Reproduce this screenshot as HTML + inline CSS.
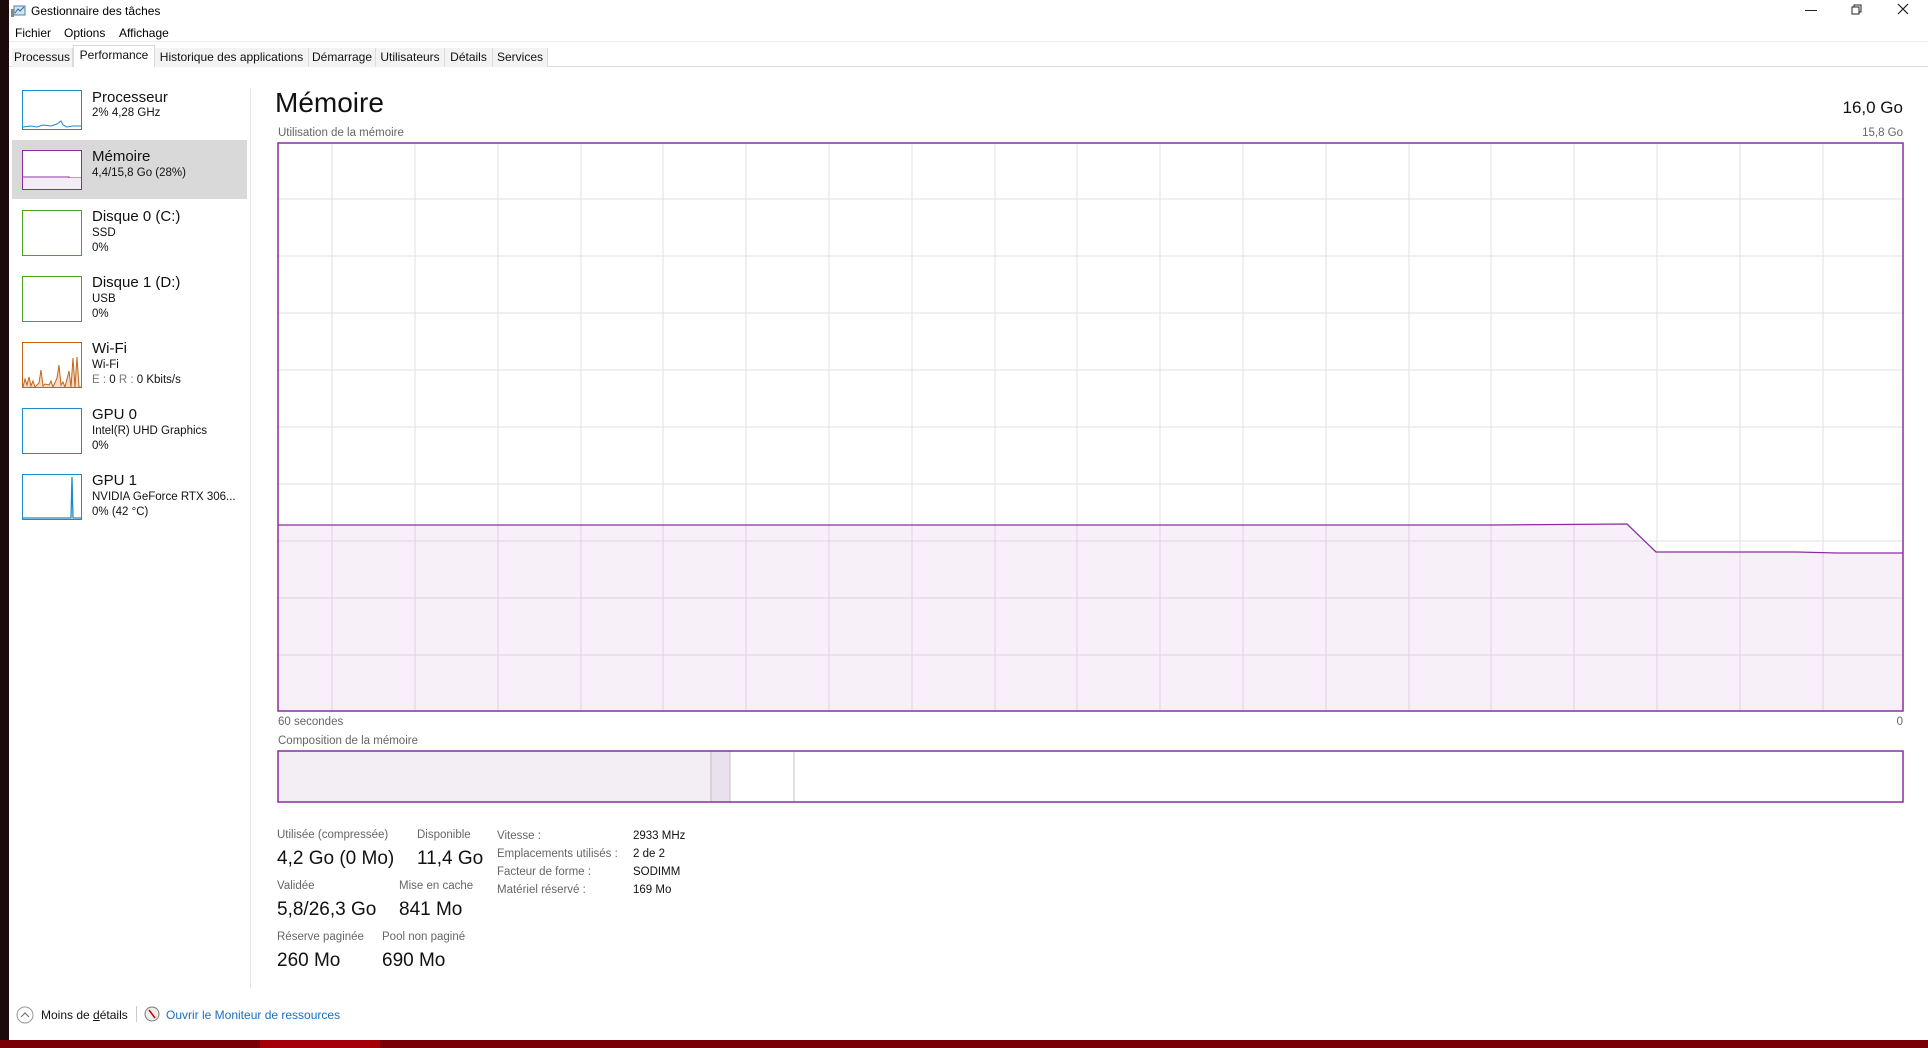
<!DOCTYPE html>
<html><head><meta charset="utf-8"><style>
*{margin:0;padding:0;box-sizing:border-box}
body{width:1928px;height:1048px;overflow:hidden;background:#fff;font-family:"Liberation Sans",sans-serif;color:#000;position:relative}
.a{position:absolute;white-space:nowrap}
.tab{position:absolute;top:48px;height:19px;font-size:12px;line-height:19px;text-align:center;background:#f3f3f3;border-right:1px solid #dcdcdc;color:#111;white-space:nowrap;overflow:hidden}
.thumb{position:absolute;left:22px;width:60px;border:1px solid}
.nm{font-size:15px;color:#111}
.sb{font-size:11.5px;color:#111;line-height:15px}
.lbl{font-size:11.5px;color:#666}
.val{font-size:19px;color:#111}
</style></head><body>
<div class="a" style="left:0;top:0;width:9px;height:1048px;background:#1a0a0a"></div>
<div class="a" style="left:0;top:1040px;width:1928px;height:8px;background:#7a0008"></div>
<div class="a" style="left:260px;top:1040px;width:120px;height:8px;background:#a5000a"></div>
<!-- title -->
<svg class="a" style="left:11px;top:5px" width="15" height="13"><rect x="3" y="1" width="11" height="9" fill="#cfe3f3" stroke="#5a7fa0"/><polyline points="4,8 7,4 9,6 13,2" fill="none" stroke="#2a6aa0"/><rect x="0" y="4" width="3" height="8" fill="#888"/></svg>
<div class="a" style="left:31px;top:4px;font-size:12px">Gestionnaire des tâches</div>
<div class="a" style="left:1805px;top:10px;width:12px;height:1px;background:#222"></div>
<svg class="a" style="left:1851px;top:4px" width="12" height="12"><rect x="1" y="3" width="7" height="7" fill="none" stroke="#222"/><polyline points="3,3 3,1 10,1 10,8 8,8" fill="none" stroke="#222"/></svg>
<svg class="a" style="left:1897px;top:3px" width="12" height="12"><path d="M1 1L11 11M11 1L1 11" stroke="#222" stroke-width="1.2"/></svg>
<div class="a" style="left:15px;top:26px;font-size:12px">Fichier</div>
<div class="a" style="left:64px;top:26px;font-size:12px">Options</div>
<div class="a" style="left:119px;top:26px;font-size:12px">Affichage</div>
<div class="a" style="left:9px;top:41px;width:1919px;height:1px;background:#ececec"></div>
<div class="a" style="left:9px;top:66px;width:1919px;height:1px;background:#d9d9d9"></div>
<div class="tab" style="left:12px;width:61px">Processus</div>
<div class="tab" style="left:73px;width:82px;top:45px;height:22px;background:#fff;border:1px solid #d9d9d9;border-bottom:none;line-height:18px">Performance</div>
<div class="tab" style="left:155px;width:154px">Historique des applications</div>
<div class="tab" style="left:309px;width:67px">Démarrage</div>
<div class="tab" style="left:376px;width:69px">Utilisateurs</div>
<div class="tab" style="left:445px;width:48px">Détails</div>
<div class="tab" style="left:493px;width:55px">Services</div>
<!-- sidebar -->
<div class="a" style="left:12px;top:140px;width:235px;height:59px;background:#d9d9d9"></div>
<div class="a" style="left:250px;top:88px;width:1px;height:900px;background:#e4e4e4"></div>
<svg class="thumb" style="top:90px;height:40px;border-color:#1c8bc7" width="60" height="40"><polyline points="0,36 8,35 14,36 20,34 28,35 34,33 38,30 40,34 44,36 50,35 58,35" fill="none" stroke="#1c8bc7"/></svg>
<div class="a nm" style="left:92px;top:89px">Processeur</div><div class="a sb" style="left:92px;top:106px">2% 4,28 GHz</div>
<svg class="thumb" style="top:150px;height:40px;border-color:#8b2da0;background:#fff" width="60" height="40"><polyline points="0,26 46,26 46,27 58,27" fill="none" stroke="#8b2da0"/><rect x="0" y="27" width="58" height="11" fill="#f2eef3"/></svg>
<div class="a nm" style="left:92px;top:148px">Mémoire</div><div class="a sb" style="left:92px;top:166px">4,4/15,8 Go (28%)</div>
<div class="thumb" style="top:210px;height:46px;border-color:#4ca322"></div>
<div class="a nm" style="left:92px;top:208px">Disque 0 (C:)</div><div class="a sb" style="left:92px;top:226px">SSD<br>0%</div>
<div class="thumb" style="top:276px;height:46px;border-color:#4ca322"></div>
<div class="a nm" style="left:92px;top:274px">Disque 1 (D:)</div><div class="a sb" style="left:92px;top:292px">USB<br>0%</div>
<svg class="thumb" style="top:342px;height:46px;border-color:#c2651a" width="60" height="46"><polyline points="0,44 2,36 4,42 6,34 8,43 10,38 12,44 16,40 18,27 20,43 22,41 26,42 28,38 30,44 34,35 36,22 38,42 40,39 42,44 46,28 48,44 50,15 52,44 54,14 56,44 58,44" fill="#f3dccb" stroke="#c2651a"/></svg>
<div class="a nm" style="left:92px;top:340px">Wi-Fi</div><div class="a sb" style="left:92px;top:358px">Wi-Fi<br><span style="color:#777">E :</span> 0 <span style="color:#777">R :</span> 0 Kbits/s</div>
<div class="thumb" style="top:408px;height:46px;border-color:#1c8bc7"></div>
<div class="a nm" style="left:92px;top:406px">GPU 0</div><div class="a sb" style="left:92px;top:424px">Intel(R) UHD Graphics<br>0%</div>
<svg class="thumb" style="top:474px;height:46px;border-color:#1c8bc7" width="60" height="46"><polyline points="0,43 48,43 49,2 50,43 58,43" fill="none" stroke="#1c8bc7" stroke-width="1.3"/></svg>
<div class="a nm" style="left:92px;top:472px">GPU 1</div><div class="a sb" style="left:92px;top:490px">NVIDIA GeForce RTX 306...<br>0% (42 °C)</div>
<!-- main -->
<div class="a" style="left:275px;top:87px;font-size:28px;color:#111">Mémoire</div>
<div class="a" style="right:25px;top:98px;font-size:17px;color:#111">16,0 Go</div>
<div class="a lbl" style="left:278px;top:127px">Utilisation de la mémoire</div>
<div class="a lbl" style="right:25px;top:127px">15,8 Go</div>
<svg class="a" style="left:277px;top:142px" width="1627" height="570">
<g stroke="#e6dfe8" stroke-width="1">
<path d="M55 0V570M138 0V570M221 0V570M304 0V570M386 0V570M469 0V570M552 0V570M635 0V570M718 0V570M800 0V570M883 0V570M966 0V570M1049 0V570M1132 0V570M1214 0V570M1297 0V570M1380 0V570M1463 0V570M1546 0V570"/>
<path d="M0 57H1627M0 114H1627M0 171H1627M0 228H1627M0 285H1627M0 342H1627M0 399H1627M0 456H1627M0 513H1627"/>
</g>
<path d="M1 383L1215 383L1350 382L1379 410L1626 411L1626 569L1 569Z" fill="#8b2da0" fill-opacity="0.07"/>
<polyline points="1,383 1215,383 1350,382 1379,410 1520,410 1560,411 1626,411" fill="none" stroke="#8b2da0" stroke-width="1.3"/>
<rect x="1" y="1" width="1625" height="568" fill="none" stroke="#8b2da0" stroke-width="1.5"/>
</svg>
<div class="a lbl" style="left:278px;top:716px">60 secondes</div>
<div class="a lbl" style="right:25px;top:716px">0</div>
<div class="a lbl" style="left:278px;top:735px">Composition de la mémoire</div>
<svg class="a" style="left:277px;top:750px" width="1627" height="53">
<rect x="1" y="1" width="433" height="51" fill="#f2eef3"/>
<rect x="434" y="1" width="19" height="51" fill="#e9e1ee"/>
<path d="M434 1V52M453 1V52M517 1V52" stroke="#c9b9cf"/>
<rect x="1" y="1" width="1625" height="51" fill="none" stroke="#8b2da0" stroke-width="1.5"/>
</svg>
<div class="a lbl" style="left:277px;top:829px">Utilisée (compressée)</div>
<div class="a lbl" style="left:417px;top:829px">Disponible</div>
<div class="a val" style="left:277px;top:848px">4,2 Go (0 Mo)</div>
<div class="a val" style="left:417px;top:848px">11,4 Go</div>
<div class="a lbl" style="left:277px;top:880px">Validée</div>
<div class="a lbl" style="left:399px;top:880px">Mise en cache</div>
<div class="a val" style="left:277px;top:899px">5,8/26,3 Go</div>
<div class="a val" style="left:399px;top:899px">841 Mo</div>
<div class="a lbl" style="left:277px;top:931px">Réserve paginée</div>
<div class="a lbl" style="left:382px;top:931px">Pool non paginé</div>
<div class="a val" style="left:277px;top:950px">260 Mo</div>
<div class="a val" style="left:382px;top:950px">690 Mo</div>
<div class="a lbl" style="left:497px;top:827px;line-height:18px">Vitesse :<br>Emplacements utilisés :<br>Facteur de forme :<br>Matériel réservé :</div>
<div class="a" style="left:633px;top:827px;font-size:11.5px;line-height:18px;color:#111">2933 MHz<br>2 de 2<br>SODIMM<br>169 Mo</div>
<!-- footer -->
<svg class="a" style="left:16px;top:1006px" width="18" height="18"><circle cx="9" cy="9" r="8" fill="none" stroke="#999"/><polyline points="5,11 9,7 13,11" fill="none" stroke="#777" stroke-width="1.2"/></svg>
<div class="a" style="left:41px;top:1008px;font-size:12px;color:#111">Moins de <u>d</u>étails</div>
<div class="a" style="left:136px;top:1006px;width:1px;height:16px;background:#ccc"></div>
<svg class="a" style="left:144px;top:1006px" width="16" height="16"><circle cx="8" cy="8" r="7" fill="#eee" stroke="#777"/><path d="M5 4L11 12" stroke="#c00" stroke-width="1.5"/></svg>
<div class="a" style="left:166px;top:1008px;font-size:12px;color:#1a6fc0">Ouvrir le Moniteur de ressources</div>
</body></html>
